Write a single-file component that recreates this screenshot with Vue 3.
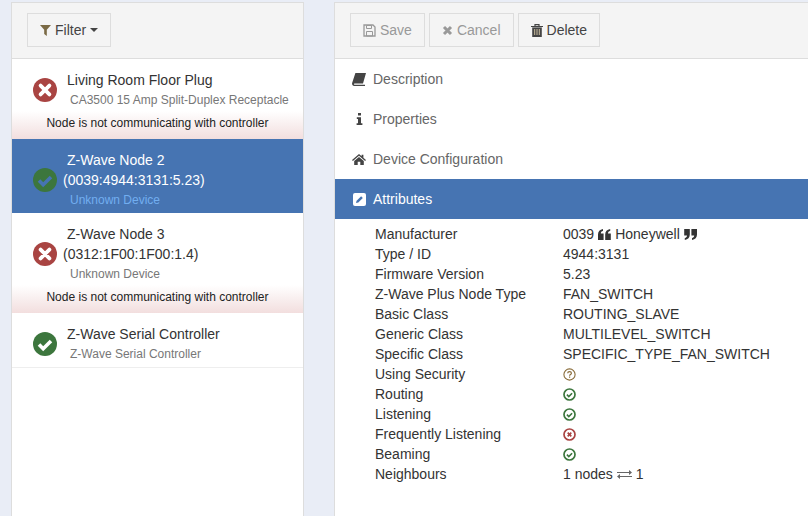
<template>
  <div class="page">
    <div class="panel left-panel">
      <div class="toolbar">
        <button class="btn">
          <svg class="icon-filter" width="11" height="12" viewBox="0 0 11 12"><path d="M0 1h11L6.8 5.8V12L4.2 10V5.8z" fill="#7a6a45"/></svg>
          Filter
          <span class="caret"></span>
        </button>
      </div>
      <div class="node-list">
        <div
          v-for="node in nodes"
          :key="node.id"
          class="node"
          :class="{ selected: node.selected, failed: node.note }"
        >
          <div class="node-main">
            <div class="node-status" :class="node.ok ? 'ok' : 'bad'">
              <svg v-if="node.ok" width="24" height="24" viewBox="0 0 24 24"><circle cx="12" cy="12" r="12" fill="#3c763d"/><path d="M6 12.5l4.2 4.2L18 9" fill="none" :stroke="node.selected ? '#4674b2' : '#fff'" stroke-width="3.6"/></svg>
              <svg v-else width="24" height="24" viewBox="0 0 24 24"><circle cx="12" cy="12" r="12" fill="#a94442"/><path d="M7.6 7.6l8.8 8.8M16.4 7.6l-8.8 8.8" fill="none" stroke="#fff" stroke-width="3.8" stroke-linecap="round"/></svg>
            </div>
            <div class="node-text">
              <div class="node-title">{{ node.title }}</div>
              <div v-if="node.address" class="node-address">{{ node.address }}</div>
              <div class="node-sub">{{ node.sub }}</div>
            </div>
          </div>
          <div v-if="node.note" class="node-note">{{ node.note }}</div>
        </div>
      </div>
    </div>

    <div class="panel right-panel">
      <div class="toolbar">
        <button class="btn muted">
          <svg width="13" height="13" viewBox="0 0 13 13"><path d="M1 1h9l2 2v9H1z" fill="none" stroke="#999" stroke-width="1.3"/><path d="M3.5 1.5h5v3h-5zM3.5 7.5h6V12h-6z" fill="none" stroke="#999"/></svg>
          Save
        </button>
        <button class="btn muted">
          <svg width="11" height="11" viewBox="0 0 11 11"><path d="M2 2l7 7M9 2l-7 7" stroke="#999" stroke-width="3"/></svg>
          Cancel
        </button>
        <button class="btn">
          <svg width="12" height="13" viewBox="0 0 12 13"><path d="M0 2.5h12M4 2V.6h4V2" fill="none" stroke="#444" stroke-width="1.2"/><path d="M1.2 3.4h9.6V13H1.2z" fill="#444"/><path d="M3.7 5v6M6 5v6M8.3 5v6" stroke="#d8c9a8" stroke-width="0.9"/></svg>
          Delete
        </button>
      </div>

      <div v-for="tab in tabs" :key="tab.name" class="tab" :class="{ active: tab.active }">
        <span class="tab-icon">
          <svg v-if="tab.name === 'Description'" width="14" height="13" viewBox="0 0 14 13"><path d="M3.4 0H14L11 10.4H2.6c-1 0-1 1.4 0 1.4H13V13H2.2C.5 13-.3 11.400.2 9.800z" fill="#444"/></svg>
          <svg v-else-if="tab.name === 'Properties'" width="7" height="12" viewBox="0 0 7 12"><path d="M2 0h3v2.500H2zM.8 4.200H5v6H6.400V12H.6v-1.800H2V6H.8z" fill="#444"/></svg>
          <svg v-else-if="tab.name === 'Device Configuration'" width="14" height="11" viewBox="0 0 14 11"><path d="M7 0l2.600 2.300V.8h1.800v3L14 6l-.9 1L7 1.800.9 7 0 6zM2.200 7L7 3l4.800 4v4H8.300V7.800H5.700V11H2.200z" fill="#444"/></svg>
          <svg v-else width="13" height="13" viewBox="0 0 13 13"><rect width="13" height="13" rx="2" fill="#fff"/><path d="M3 10l.6-2.300 4.500-4.500 1.700 1.700-4.500 4.500z" fill="#4674b2"/></svg>
        </span>
        {{ tab.name }}
      </div>

      <div class="attributes">
        <div v-for="row in attributes" :key="row.label" class="attr-row">
          <span class="attr-label">{{ row.label }}</span>
          <span class="attr-value">
            <template v-if="row.label === 'Manufacturer'">
              0039
              <svg class="quote" width="13" height="11" viewBox="0 0 13 11"><path d="M0 5.500C0 2.500 1.800.6 5 0v2C3.500 2.300 2.800 3.200 2.800 4.500H5.600V11H0zM7.200 5.500C7.200 2.500 9 .6 12.200 0v2c-1.500.3-2.200 1.200-2.200 2.500h2.800V11H7.200z" fill="#333"/></svg>
              Honeywell
              <svg class="quote" width="13" height="11" viewBox="0 0 13 11"><path d="M5.800 5.500c0 3-1.800 4.900-5 5.500V9c1.500-.3 2.200-1.200 2.200-2.500H.2V0h5.600zM13 5.500c0 3-1.800 4.900-5 5.500V9c1.500-.3 2.200-1.200 2.200-2.500H7.400V0H13z" fill="#333"/></svg>
            </template>
            <template v-else-if="row.label === 'Neighbours'">
              1 nodes
              <svg class="swap" width="15" height="11" viewBox="0 0 15 11"><path d="M0 3h12V1l3 2.500L12 6V4H0zM15 7H3V5L0 7.500 3 10V8h12z" fill="#666"/></svg>
              1
            </template>
            <svg v-else-if="row.state === 'yes'" class="state" width="13" height="13" viewBox="0 0 13 13"><circle cx="6.500" cy="6.500" r="5.500" fill="none" stroke="#3c763d" stroke-width="1.700"/><path d="M3.900 6.600l1.900 1.900 3.300-3.300" fill="none" stroke="#3c763d" stroke-width="1.600"/></svg>
            <svg v-else-if="row.state === 'no'" class="state" width="13" height="13" viewBox="0 0 13 13"><circle cx="6.500" cy="6.500" r="5.500" fill="none" stroke="#a94442" stroke-width="1.700"/><path d="M4.700 4.700l3.600 3.600M8.300 4.700l-3.600 3.600" fill="none" stroke="#a94442" stroke-width="1.700"/></svg>
            <svg v-else-if="row.state === 'unknown'" class="state" width="13" height="13" viewBox="0 0 13 13"><circle cx="6.500" cy="6.500" r="5.600" fill="none" stroke="#8a6d3b" stroke-width="1.100"/><path d="M4.700 5.200c0-2.200 3.700-2.200 3.700 0 0 1.300-1.800 1.300-1.800 2.500" fill="none" stroke="#8a6d3b" stroke-width="1.200"/><path d="M6 8.500h1.200v1.300H6z" fill="#8a6d3b"/></svg>
            <template v-else>{{ row.value }}</template>
          </span>
        </div>
      </div>
    </div>
  </div>
</template>

<script setup>
const nodes = [
  {
    id: 1,
    title: 'Living Room Floor Plug',
    sub: 'CA3500 15 Amp Split-Duplex Receptacle',
    ok: false,
    note: 'Node is not communicating with controller'
  },
  {
    id: 2,
    title: 'Z-Wave Node 2',
    address: '(0039:4944:3131:5.23)',
    sub: 'Unknown Device',
    ok: true,
    selected: true
  },
  {
    id: 3,
    title: 'Z-Wave Node 3',
    address: '(0312:1F00:1F00:1.4)',
    sub: 'Unknown Device',
    ok: false,
    note: 'Node is not communicating with controller'
  },
  {
    id: 4,
    title: 'Z-Wave Serial Controller',
    sub: 'Z-Wave Serial Controller',
    ok: true
  }
]

const tabs = [
  { name: 'Description' },
  { name: 'Properties' },
  { name: 'Device Configuration' },
  { name: 'Attributes', active: true }
]

const attributes = [
  { label: 'Manufacturer' },
  { label: 'Type / ID', value: '4944:3131' },
  { label: 'Firmware Version', value: '5.23' },
  { label: 'Z-Wave Plus Node Type', value: 'FAN_SWITCH' },
  { label: 'Basic Class', value: 'ROUTING_SLAVE' },
  { label: 'Generic Class', value: 'MULTILEVEL_SWITCH' },
  { label: 'Specific Class', value: 'SPECIFIC_TYPE_FAN_SWITCH' },
  { label: 'Using Security', state: 'unknown' },
  { label: 'Routing', state: 'yes' },
  { label: 'Listening', state: 'yes' },
  { label: 'Frequently Listening', state: 'no' },
  { label: 'Beaming', state: 'yes' },
  { label: 'Neighbours' }
]
</script>

<style>
body {
  background: #e9edf6;
}
</style>

<style scoped>
.page {
  display: flex;
  align-items: stretch;
  gap: 30px;
  height: 514px;
  padding: 2px 0 0 11px;
  overflow: hidden;
  font-family: "Liberation Sans", Arial, sans-serif;
  font-size: 14px;
  line-height: 20px;
  color: #333;
}

.panel {
  background: #fff;
  border: 1px solid #ddd;
  border-bottom: none;
  box-sizing: border-box;
}

.left-panel {
  width: 293px;
  flex-shrink: 0;
}

.right-panel {
  flex: 1;
  min-width: 0;
  border-right: none;
}

.toolbar {
  display: flex;
  gap: 4px;
  height: 56px;
  box-sizing: border-box;
  padding: 10px 15px;
  background: #f4f4f4;
  border-bottom: 1px solid #ddd;
}

.left-panel .toolbar {
  padding-left: 15px;
}

.btn {
  display: flex;
  align-items: center;
  gap: 4px;
  height: 34px;
  padding: 0 12px;
  background: #f4f4f4;
  border: 1px solid #ddd;
  font: inherit;
  color: #444;
}

.btn.muted {
  color: #999;
}

.caret {
  width: 0;
  height: 0;
  border-top: 4px solid #444;
  border-left: 4px solid transparent;
  border-right: 4px solid transparent;
}

.node {
  border-bottom: 1px solid #eee;
}

.node.failed {
  background: linear-gradient(to bottom, #fff calc(100% - 28px), #f2dede 100%);
  border-bottom: none;
}

.node.selected {
  background: #4674b2;
  color: #fff;
  border-bottom: none;
}

.node-main {
  display: flex;
  align-items: center;
  gap: 10px;
  padding: 11px 15px 4px 21px;
}

.node-status {
  flex-shrink: 0;
  height: 24px;
}

.node-title {
  padding-left: 0;
}

.node-address {
  margin-left: -4px;
}

.node-sub {
  margin: 1px 0 0 3px;
  font-size: 12px;
  line-height: 18px;
  color: #777;
  white-space: nowrap;
}

.selected .node-sub {
  color: #72aef0;
}

.node-note {
  padding: 1px 0 7px;
  font-size: 12px;
  line-height: 18px;
  text-align: center;
  color: #222;
}

.tab {
  display: flex;
  align-items: center;
  height: 40px;
  padding-left: 17px;
  color: #666;
}

.tab.active {
  background: #4674b2;
  color: #fff;
}

.tab-icon {
  display: flex;
  justify-content: center;
  width: 14px;
  margin-right: 7px;
}

.attributes {
  padding: 5px 0 0 40px;
}

.attr-row {
  display: flex;
  height: 20px;
  align-items: center;
}

.attr-label {
  width: 188px;
  flex-shrink: 0;
}

.attr-value {
  display: flex;
  align-items: center;
  gap: 4px;
}

.quote,
.swap,
.state {
  flex-shrink: 0;
}
</style>
